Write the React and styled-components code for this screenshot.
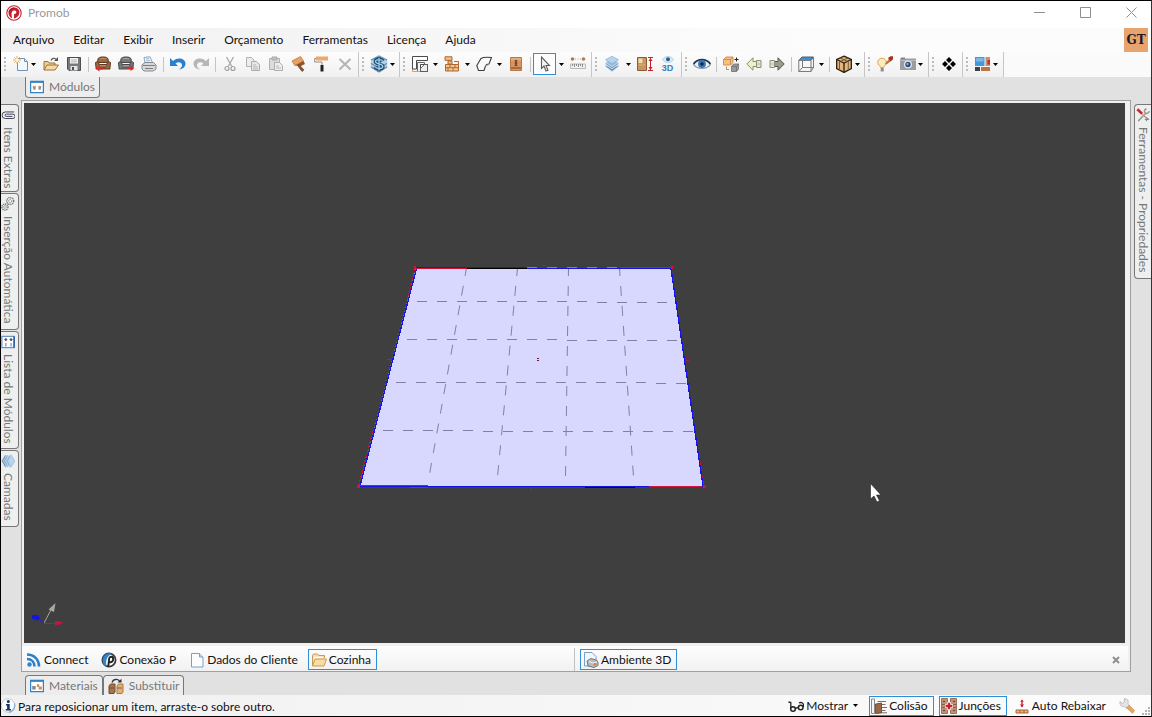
import React from 'react'
import styled, { createGlobalStyle, css } from 'styled-components';

const GlobalStyle = createGlobalStyle`
  * {
    box-sizing: border-box;
  }
  body {
    margin: 0;
    font-family: Lato, "Open Sans", sans-serif;
    font-size: 12px;
    line-height: 16px;
    color: #111;
  }
  button {
    font: inherit;
    color: inherit;
    background: none;
    border: none;
    padding: 0;
    margin: 0;
  }
  svg {
    display: block;
    flex: none;
  }
`;

/* ---------- icons ---------- */

function Icon({ size = 16, children }) {
  return <svg width={size} height={size} viewBox="0 0 16 16" aria-hidden="true">{children}</svg>
}

const CaretIcon = () => (
  <svg width="5" height="3" viewBox="0 0 5 3" aria-hidden="true"><path d="M0 0h5L2.5 3z" fill="#000" /></svg>
);

const LogoIcon = () => (
  <Icon>
    <circle cx="8" cy="8" r="7.2" fill="#fff" stroke="#c4202f" strokeWidth="1.1" />
    <path d="M2.500 8.500C2 4.500 5 2.300 8.500 2.400c4 .2 6 4 4.500 7-.8 2-2.500 3.500-5 4.100V9.200l1.300-.4c1.700-.8 1.200-3.300-.9-3.300-2.400 0-2.800 1.700-2.900 4L6 13.200c-2-.8-3.300-2.500-3.500-4.700z" fill="#c4202f" />
    <path d="M3.200 6.500c1-2.300 3-3.500 5.300-3.400" stroke="#8d1420" fill="none" />
  </Icon>
);

const NewIcon = () => (
  <Icon>
    <path d="M5.500 2.500h6l3 3v9h-10v-8" fill="#f4f9fe" stroke="#6f93b8" />
    <path d="M11.500 2.500v3h3" fill="#d5e6f6" stroke="#6f93b8" />
    <path d="M4 0v8M0 4h8M1.200 1.200l5.600 5.600M6.800 1.200L1.200 6.800" stroke="#e7a64e" strokeWidth=".9" />
    <circle cx="4" cy="4" r="1.600" fill="#fff6d8" />
  </Icon>
);

const OpenIcon = () => (
  <Icon>
    <path d="M1 14V5.500h4l1 1.500h6v2" fill="#f0cf93" stroke="#9c7436" />
    <path d="M1 14l3-5h11.500L12 14z" fill="#f6d9a4" stroke="#9c7436" />
    <path d="M8 4.500c1-2.500 3.500-3 5-1" fill="none" stroke="#555" strokeWidth="1.200" />
    <path d="M15 1v4h-4z" fill="#555" />
  </Icon>
);

const SaveIcon = () => (
  <Icon>
    <path d="M1.500 1.500h13v13H3l-1.500-1.500z" fill="#777a7d" stroke="#4d4f51" />
    <path d="M4 2h8v5.500H4z" fill="#f2f2f2" />
    <path d="M5 4h6M5 5.800h6" stroke="#a8a8a8" strokeWidth=".8" />
    <path d="M4.500 10h7v4.500h-7z" fill="#e4e4e4" />
    <path d="M6 11h2v3H6z" fill="#4d4f51" />
  </Icon>
);

function ArmchairIcon({ tone, edge, light, flip }) {
  return (
    <Icon>
      <path d="M2.500 6.500l.5-3.500C3.500 1.500 5 1 8 1s4.500.5 5 2l.5 3.500z" fill={tone} stroke={edge} />
      <path d="M5 3c1.500-.8 4.500-.8 6 0" fill="none" stroke={light} />
      <path d="M.5 6.500c1-1.200 3.500-.8 3.500 1.200V9h8V7.700c0-2 2.500-2.400 3.500-1.200L15 11.500V13H1v-1.500z" fill={tone} stroke={edge} />
      <path d="M4.500 8.500h7M4.500 11h7" stroke={edge} />
      <path d="M5 9.800h6" stroke={light} strokeWidth="1.300" />
      {flip
        ? <path d="M8.500 11h4V8.800L16 12l-3.500 3.200V13h-4z" fill="#d22e30" />
        : <path d="M8 11.500H4.500V9.300L1 12.500l3.500 3.200v-2.200H8z" fill="#d22e30" />}
    </Icon>
  )
}

const PrintIcon = () => (
  <Icon>
    <path d="M4 7L3 1.500 9 .7l2.500 6z" fill="#e8f2fb" stroke="#8fa9c0" />
    <path d="M5 3l3-.4M5.400 4.800l3.500-.4" stroke="#83a9cc" strokeWidth=".8" />
    <path d="M1 9l3-2.500h8.500L15 9v4l-3 2H3l-2-2z" fill="#d8d8da" stroke="#87898c" />
    <path d="M2 9.500h12M4 12.500h8" stroke="#7d7f82" />
  </Icon>
);

function TurnIcon({ color, flip }) {
  return (
    <Icon>
      <g transform={flip ? 'matrix(-1 0 0 1 16 0)' : undefined}>
        <path d="M0 2v8h8L5.500 7.500C8.500 5 12.500 6.500 12 9.500c-.2 1.700-1.500 3-3 4.300C13 13 15.700 10.500 15.500 7.300 15 2.500 8 .5 3 5z" fill={color} />
      </g>
    </Icon>
  )
}

const CutIcon = () => (
  <Icon>
    <path d="M4.500 1l5.300 9.500M11.500 1L6.200 10.500" stroke="#a9a9a9" strokeWidth="1.300" />
    <circle cx="5" cy="12.500" r="2" fill="none" stroke="#a0a0a0" strokeWidth="1.200" />
    <circle cx="11" cy="12.500" r="2" fill="none" stroke="#a0a0a0" strokeWidth="1.200" />
  </Icon>
);

const CopyIcon = () => (
  <Icon>
    <path d="M1.500 1.500h5l2.500 2.500v6.500H1.500z" fill="#ececec" stroke="#b2b2b2" />
    <path d="M6.500 5.500h5l3 3v6h-8z" fill="#e6e6e6" stroke="#acacac" />
    <path d="M8 9h3M8 11h5M8 13h5" stroke="#b8b8b8" />
  </Icon>
);

const PasteIcon = () => (
  <Icon>
    <path d="M1.500 2.500h10v11h-10z" fill="#dcdcdc" stroke="#b0b0b0" />
    <path d="M4 1h5v3H4z" fill="#c4c4c4" stroke="#a8a8a8" />
    <path d="M6.500 6.500h5l3 3v5h-8z" fill="#efefef" stroke="#acacac" />
    <path d="M8 10h3M8 12h5" stroke="#b8b8b8" />
  </Icon>
);

const BrushIcon = () => (
  <Icon>
    <path d="M1 5L9.500.5l3 4.500-8.700 4.500z" fill="#e9a263" stroke="#c27a3d" strokeWidth=".8" />
    <path d="M4 9.500L12.500 5l1.500 3-4 2z" fill="#8d5430" />
    <path d="M8 8.500l5 5.500-2 1.500-4.500-6z" fill="#8a5230" stroke="#6d3d20" strokeWidth=".6" />
  </Icon>
);

const RollerIcon = () => (
  <Icon>
    <path d="M2 .5h12v4H2z" fill="#eba869" />
    <path d="M2 2.500H.7v3.500H8v3" fill="none" stroke="#8c8c8c" strokeWidth="1" />
    <path d="M6.500 9h3v6.500h-3z" fill="#222" />
  </Icon>
);

const DeleteIcon = () => (
  <Icon><path d="M2.500 3l11 10.500M13.500 3l-11 10.500" stroke="#b4b4b4" strokeWidth="2" /></Icon>
);

const DollarIcon = () => (
  <Icon size={18}>
    <path d="M.8 4.500L8 .8l7.200 3.700v6L8 15.200.8 10.500z" fill="#b5d3ea" />
    <path d="M.8 4.500L8 .8l7.200 3.700M.8 7.500L8 11.500l7.200-4M.8 10.500L8 15l7.200-4.500" fill="none" stroke="#6f97b6" strokeWidth="1.200" />
    <path d="M11.600 5.300C10.500 3.300 4.700 3 4.700 5.800c0 2.900 6.800 1.600 6.800 4.400 0 2.800-5.800 2.700-7.200.4M8 1.800v12.600" fill="none" stroke="#1e4a70" strokeWidth="3" />
    <path d="M11.400 5.300C10.500 3.700 4.900 3.500 4.900 5.800c0 2.600 6.500 1.600 6.500 4.400 0 2.300-5.400 2.300-6.900.4M8 2.500v11.300" fill="none" stroke="#9ecdec" strokeWidth="1.200" />
  </Icon>
);

const WallsIcon = () => (
  <Icon>
    <path d="M.5 4v11.500H8" stroke="#e39a63" fill="none" />
    <path d="M.5 13V.5h15v4H4.500V13z" fill="#fff" stroke="#4a4a4a" />
    <path d="M5.500 15V6.500h7v1.500" fill="none" stroke="#6a6a6a" />
    <path d="M8.500 8.500h7v7h-7z" fill="#fff" stroke="#4a4a4a" />
    <path d="M8.500 12.500l4-4h3v7h-7z" fill="#eee" stroke="#4a4a4a" strokeWidth=".8" />
  </Icon>
);

const BricksIcon = () => (
  <Icon>
    <path d="M1 .8h7v3.500H1zM4 5h4v3H4z" fill="#f2c08c" stroke="#b0662e" />
    <path d="M1.500 8.500h13v6.500h-13z" fill="#f3c494" stroke="#b0662e" />
    <path d="M1.500 11.700h13M6 8.500v3.200M11 8.500v3.200M4 11.700V15M9 11.700V15M10 5.500h4.500v3" stroke="#b0662e" fill="none" />
  </Icon>
);

const ShapeIcon = () => (
  <Icon>
    <path d="M5 2.500c2-1.200 6-1.500 10.500-1L13 8c-2 0-3 .5-3.500 2L8 14.500H2.500L.8 9.500z" fill="#fafafa" stroke="#3c3c3c" strokeWidth="1.100" />
    <path d="M13 8.500L9 10" stroke="#999" />
  </Icon>
);

const CabinetIcon = () => (
  <Icon>
    <path d="M2.500 1.500h11v13h-11z" fill="#d9945f" stroke="#b8794b" />
    <path d="M3 2h10v2.500H3z" fill="#e6ab78" />
    <path d="M3 12h10" stroke="#6f4325" />
    <path d="M8 4.500v5" stroke="#3f2a1b" strokeWidth="1.200" />
    <path d="M6.500 4.500h3M6.500 9.500h3M6.500 7h3" fill="none" stroke="#5a3b25" strokeWidth=".8" />
  </Icon>
);

const PointerIcon = () => (
  <Icon><path d="M4.500 1v11.500L7 10l2 5 2-.8-2-4.700h3.500z" fill="#f6f6f6" stroke="#5d5d5d" strokeWidth="1.100" /></Icon>
);

const MeasureIcon = () => (
  <Icon>
    <circle cx="2.500" cy="3" r="1.800" fill="#b9764f" />
    <circle cx="13.500" cy="3" r="1.800" fill="#b9764f" />
    <path d="M5 3h1M7.500 3h1M10 3h1" stroke="#aaa" />
    <path d="M.5 8h15v4.500H.5z" fill="#f0f0f0" stroke="#b9b9b9" />
    <path d="M2.500 8v2M4.500 8v3M6.500 8v2M8.500 8v3M10.500 8v2M12.500 8v3" stroke="#777" strokeWidth=".8" />
  </Icon>
);

const LayersIcon = () => (
  <Icon>
    <path d="M1.500 10.500L8 15.500l6.500-5V9L8 12 1.500 9z" fill="#6a8fb6" stroke="#dcebf7" strokeWidth=".6" />
    <path d="M1.500 8.200L8 13l6.500-4.800V6.500h-13z" fill="#7fa5cb" stroke="#e4f0fa" strokeWidth=".7" />
    <path d="M1.500 6L8 10.500 14.500 6 8 3z" fill="#93b7d9" stroke="#e4f0fa" strokeWidth=".7" />
    <path d="M1.500 3.700L8 7.700l6.500-4L8 .3z" fill="#b9d4ec" stroke="#8db2d5" strokeWidth=".7" />
  </Icon>
);

const HeightIcon = () => (
  <Icon>
    <path d="M.5 1.500h9v13h-9z" fill="#c8955e" stroke="#8b5d32" />
    <path d="M1.500 2.500h4v4.500h-4z" fill="#f2dcae" />
    <path d="M1.500 9h7" stroke="#ddb07c" />
    <path d="M11 1.500h5M11 14.500h5M13.500 2v12" stroke="#c8202e" />
    <path d="M11.500 5l2-3 2 3zM11.500 11l2 3 2-3z" fill="#c8202e" />
  </Icon>
);

const View3DIcon = () => (
  <ThreeD>
    <svg width="12" height="7" viewBox="0 0 12 7" aria-hidden="true">
      <path d="M.5 3.500c2-4 9-4 11 0-2 4-9 4-11 0z" fill="#d7eaf6" stroke="#a4c5da" strokeWidth=".7" />
      <circle cx="6" cy="3.300" r="2" fill="#27618c" />
    </svg>
    3D
  </ThreeD>
);

const EyeIcon = () => (
  <Icon size={18}>
    <path d="M.5 8.500C4 3 12 3 15.500 8.500 12 13 4 13 .5 8.500z" fill="#eef3f7" stroke="#8a98a6" />
    <path d="M.5 8C4 2.800 12 2.800 15.500 8" fill="none" stroke="#25384d" strokeWidth="1.500" />
    <circle cx="8" cy="8" r="3.500" fill="#3a78bd" />
    <circle cx="8" cy="8" r="1.600" fill="#0e2b4e" />
  </Icon>
);

const TransformIcon = () => (
  <Icon>
    <path d="M.5 3.500L3 1h7v5.500L7.500 9h-7z" fill="#f3bf82" stroke="#c98b4f" strokeWidth=".9" />
    <path d="M.5 3.500h7L10 1M7.500 3.500V9" fill="none" stroke="#c98b4f" strokeWidth=".9" />
    <path d="M8.500 10.500l2-2.500H16v4.500L13.500 15.500h-5z" fill="#9a9a9a" stroke="#6e6e6e" strokeWidth=".8" />
    <path d="M8.500 10.500h5L16 8M13.500 10.500v5" fill="none" stroke="#6e6e6e" strokeWidth=".8" />
    <path d="M13.500 1.500v4M11.500 3.500h4" stroke="#222" />
    <path d="M3.500 10.500v3H6" fill="none" stroke="#c98b4f" />
  </Icon>
);

const StepIcon = ({ flip }) => (
  <Icon>
    <g transform={flip ? 'matrix(-1 0 0 1 16 0)' : undefined}>
      <path d="M.8 8L7 1.800v3.700h3.500v5H7v3.700z" fill={flip ? '#9b9b92' : '#eef0c0'} stroke={flip ? '#55554f' : '#8d8e74'} />
      <path d="M10.500 4.500H15v7h-4.500z" fill="#e6e7c4" stroke="#8d8e80" />
      <path d="M10.500 8H15" stroke="#b5b69c" />
    </g>
  </Icon>
);

const WireCubeIcon = () => (
  <Icon>
    <path d="M4 1h11.500L13 4.500H.800z" fill="#3d8fd8" stroke="#55616b" />
    <path d="M.8 4.500H13v11H.8zM13 15.500l2.500-4V1M4.500 5v6.500h11M4.500 11.500L.8 15.500" fill="none" stroke="#777c80" />
  </Icon>
);

const BoxIcon = () => (
  <Icon size={18}>
    <path d="M8 1l6.500 3v8L8 15.500 1.500 12V4z" fill="#e5b77d" stroke="#2d2218" strokeWidth="1.200" />
    <path d="M1.500 4L8 7.200 14.500 4M8 7.200v8.300" fill="none" stroke="#2d2218" strokeWidth="1.200" />
    <path d="M4 5.500V13M11.800 5.500v8M4.700 2.700l6.500 3M11.500 2.600L5 5.700" stroke="#7a5630" strokeWidth=".9" />
  </Icon>
);

const BulbIcon = () => (
  <Icon>
    <path d="M3.500 11.500C3.500 9.500.7 9 .7 6.500A4.300 4.300 0 0 1 9.300 6.500C9.300 9 6.700 9.500 6.700 11.500z" fill="#fdebbd" stroke="#e0a34a" />
    <path d="M3.700 12h3v3.500h-3z" fill="#8d8d8d" />
    <path d="M8 7.500L12 3l2 2-4.500 3.500z" fill="#b5793f" />
    <path d="M11 2L13.500.3H16v3L13.500 5.500z" fill="#a63322" />
  </Icon>
);

const CameraIcon = () => (
  <Icon>
    <path d="M0 2.500h16v11.500H0z" fill="#9a9da1" />
    <path d="M1 1.500h4v1.500H1z" fill="#7f8286" />
    <path d="M0 4.500h16" stroke="#b8bbbe" />
    <circle cx="8" cy="8.500" r="4" fill="#e3e7ea" />
    <circle cx="8" cy="8.500" r="2.700" fill="#2f4f80" />
    <circle cx="7.500" cy="8" r="1" fill="#9fc3ea" />
  </Icon>
);

const DiamondsIcon = () => (
  <Icon>
    <path d="M8 1l3 3-3 3-3-3zM8 9l3 3-3 3-3-3zM4 5l3 3-3 3-3-3zM12 5l3 3-3 3-3-3z" fill="#000" />
  </Icon>
);

const LayoutIcon = () => (
  <Icon>
    <path d="M0 1h9.500v9H0z" fill="#4497d8" />
    <path d="M1 2h7.500v3.500H1z" fill="#78b9e8" />
    <path d="M10.500 1h4.500v9h-4.500z" fill="#cf9163" />
    <path d="M12.500 4h2.500v4.500h-2.500z" fill="#c52b3a" />
    <path d="M0 11h5v4H0z" fill="#3f4347" />
    <path d="M6 11h9v4H6z" fill="#ba744a" />
  </Icon>
);

const ModulesIcon = () => (
  <Icon size={14}>
    <path d="M.7 1.500h14.600v13H.7z" fill="#fff" stroke="#3583c4" strokeWidth="1.400" />
    <path d="M.5 2.200h15" stroke="#3583c4" strokeWidth="2.200" />
    <path d="M3 7h2.500v4H4zM10.500 7H13l-1 4h-1.500z" fill="#a6805f" />
    <path d="M6 6.500v4.500M10.200 6.500v4.500" stroke="#777" strokeWidth=".8" />
  </Icon>
);

const MaterialsIcon = () => (
  <Icon size={14}>
    <path d="M.7 1.500h14.600v13H.7z" fill="#fff" stroke="#3583c4" strokeWidth="1.400" />
    <path d="M.5 2.200h15" stroke="#3583c4" strokeWidth="2.200" />
    <path d="M2.500 8h4v4h-4z" fill="#7b8d9c" />
    <path d="M8 6h2.500v3H8zM10 8.500h3.500V12H10z" fill="#d18c55" />
  </Icon>
);

const SwapIcon = () => (
  <Icon>
    <path d="M1 8l1.500-2H7v8l-1 1.500H1z" fill="#a4764c" stroke="#6f4c2e" />
    <path d="M9 8l1.500-2H15v8l-1 1.500H9z" fill="#e2b077" stroke="#a97a45" />
    <path d="M4 4.500C5 1 9.500.5 11.500 3" fill="none" stroke="#333" strokeWidth="1.300" />
    <path d="M9.500 4.500h4V.8z" fill="#333" />
    <path d="M1 10h5M9 10h5" stroke="#6f4c2e" strokeWidth=".8" />
  </Icon>
);

const ClipIcon = () => (
  <Icon size={14}>
    <path d="M15 4.500H5a3.500 3.500 0 0 0 0 7.500h8.500a2.500 2.500 0 0 0 0-5H6a1.300 1.300 0 0 0 0 2.600h7" fill="none" stroke="#3d3d56" strokeWidth="1.100" />
  </Icon>
);

const GearsIcon = () => (
  <Icon size={14}>
    <g fill="none" stroke="#777" strokeDasharray="1.500 .8">
      <circle cx="10.500" cy="4.500" r="4" strokeWidth="1.600" />
      <circle cx="10.500" cy="4.500" r="1.800" />
      <circle cx="4.500" cy="11.500" r="3.500" strokeWidth="1.600" />
      <circle cx="4.500" cy="11.500" r="1.500" />
    </g>
  </Icon>
);

const ListIcon = () => (
  <Icon size={14}>
    <path d="M1 1.500h14v13H1z" fill="#fff" stroke="#6d94c8" strokeWidth="1.400" />
    <path d="M15 1.500v13" stroke="#2b5fa8" strokeWidth="1.800" />
    <path d="M3.500 5.500L5.500 3l2 2.500-2 1.500zM9.500 5.500l2-2.500 2 2.500-2 1.500z" fill="#6b5145" />
    <path d="M5.500 9v4M11.500 9v4" stroke="#6b9fd4" strokeWidth="1.500" />
  </Icon>
);

const SideLayersIcon = () => (
  <Icon size={14}>
    <path d="M4.500 1L.5 8l4 7H6V1z" fill="#6a8fb6" stroke="#e4f0fa" strokeWidth=".6" />
    <path d="M6.800 1L2.800 8l4 7h1.500V1z" fill="#7fa5cb" stroke="#e4f0fa" strokeWidth=".7" />
    <path d="M9 1L5.200 8 9 15h1.500V1z" fill="#93b7d9" stroke="#e4f0fa" strokeWidth=".7" />
    <path d="M11.500 1l-4 7 4 7 4.200-7z" fill="#b9d4ec" stroke="#8db2d5" strokeWidth=".7" />
  </Icon>
);

const ToolsIcon = () => (
  <Icon size={14}>
    <path d="M2.500 15l8.500-9M12 1c-2.500.5-3 3-1.500 4.500S15 6 15 3.500" fill="none" stroke="#9a9a9a" strokeWidth="1.800" />
    <path d="M9 9l5 3.500M12 10.500V15M10 13h5" stroke="#8a8a8a" strokeWidth="1.300" />
    <path d="M1.500 1.500l5.500 5" stroke="#cf2530" strokeWidth="3" />
    <path d="M7 7l2.500 2" stroke="#e0a565" strokeWidth="2" />
  </Icon>
);

const FeedIcon = () => (
  <Icon>
    <circle cx="3.500" cy="12.500" r="2.200" fill="#2f86cf" />
    <path d="M1 7c4.500 0 7.500 3 7.500 7.500M1 2.500c7 0 12 5 12 12" fill="none" stroke="#2f7fc4" strokeWidth="2.600" />
  </Icon>
);

const ConexaoIcon = () => (
  <Icon>
    <circle cx="8" cy="8" r="6.600" fill="#fff" stroke="#3a3c42" strokeWidth="1.800" />
    <path d="M11 1.500C4 0 0 6 2.500 12.500L5.500 15C4.500 9 5 5 11 1.500z" fill="#2f86cf" />
    <path d="M7.200 15l1-8.500c.5-2.500 4.300-2.500 4 .8-.2 2.500-2.500 3.400-4 2.500" fill="none" stroke="#222" strokeWidth="1.900" />
  </Icon>
);

const PageIcon = () => (
  <Icon>
    <path d="M2.500 1.500h8l3.500 3.500v10H2.500z" fill="#fbfdff" stroke="#7c9fca" />
    <path d="M10.500 1.500V5H14" fill="#cadcf0" stroke="#7c9fca" />
  </Icon>
);

const FolderIcon = () => (
  <Icon>
    <path d="M1.500 14V3.500l1-1.500h4l1 1.500h6V6" fill="#f5dcae" stroke="#c99a55" />
    <path d="M3 5.500h9M2.500 7.500h9" stroke="#fff" strokeWidth="1.300" />
    <path d="M1.500 14l2.500-7h11.500L13 14z" fill="#f7dca4" stroke="#c99a55" />
  </Icon>
);

const SceneIcon = () => (
  <Icon>
    <path d="M1.500.5h7.500l4 4v9.500H1.500z" fill="#f2f7fc" stroke="#7c9fca" />
    <path d="M4 9l3.500-2.500 6 1.500 1.500 2.500v3l-4 2L5 14z" fill="#b7b9bd" stroke="#74777b" />
    <path d="M6 9.500l4 1.500 4-1" fill="none" stroke="#f3f3f3" />
    <circle cx="12" cy="12.200" r="1.300" fill="#d07d45" />
  </Icon>
);

const InfoIcon = () => (
  <Icon>
    <circle cx="7" cy="7.500" r="6.700" fill="#fdfdfd" stroke="#c5c9ce" />
    <path d="M13.500 5.500A6.600 6.600 0 0 1 8 14.200" fill="none" stroke="#8cb0da" strokeWidth="1.500" />
    <circle cx="7.300" cy="3.500" r="1.500" fill="#16365f" />
    <path d="M5 6h3.700v5h1.300v1.500H4.800V11h1.300V7.400H5z" fill="#16365f" />
  </Icon>
);

const GlassesIcon = () => (
  <Icon size={16}>
    <path d="M.5 4l2.300.5V10M15.500 9V6.500C15 4.500 12.500 4 11 5" fill="none" stroke="#222" strokeWidth="1.300" />
    <circle cx="5" cy="11" r="2.300" fill="none" stroke="#222" strokeWidth="1.500" />
    <circle cx="12.700" cy="9.500" r="2.300" fill="none" stroke="#222" strokeWidth="1.500" />
    <path d="M7.200 10.300l3.300-.8" stroke="#222" strokeWidth="1.300" />
  </Icon>
);

const CollisionIcon = () => (
  <Icon>
    <path d="M.5 1h3v14.500h-3z" fill="#f4f4f4" stroke="#8a8a8a" />
    <path d="M4.500 6l6-1v10l-6 .5z" fill="#9b6746" stroke="#5c3c28" strokeWidth=".8" />
    <path d="M6.500 3.500H15M11 6.500h3.500M11 9.500h5M11 12.500h3.500M11 14.800h5" stroke="#6c6058" strokeWidth=".9" />
  </Icon>
);

const JunctionIcon = () => (
  <Icon>
    <path d="M.5.5h6v6h-6zM9.500.5h6v6h-6zM.5 9.500h6v6h-6zM9.500 9.500h6v6h-6zM.5 6.500h15v3H.5z" fill="#c29276" stroke="#8d5d42" strokeWidth=".8" />
    <circle cx="3" cy="3.500" r=".8" fill="#333" />
    <circle cx="13" cy="3.500" r=".8" fill="#333" />
    <circle cx="3" cy="12.500" r=".8" fill="#333" />
    <circle cx="13" cy="12.500" r=".8" fill="#333" />
    <path d="M8 4.200v7.600M4.200 8h7.600" stroke="#fff" strokeWidth="4.200" />
    <path d="M8 4.700v6.600M4.700 8h6.600" stroke="#c8202e" strokeWidth="2.400" />
  </Icon>
);

const LowerIcon = () => (
  <Icon>
    <path d="M8 3v6" stroke="#c8202e" strokeWidth="1.400" />
    <path d="M5.800 6L8 9.500 10.200 6 8 7zM6.200 4L8 1.200 9.800 4 8 3.500z" fill="#c8202e" />
    <path d="M2 12h12v3H2z" fill="#e9b878" stroke="#9d5a35" strokeWidth=".9" />
    <path d="M6 12v3M10 12v3" stroke="#9d5a35" strokeWidth=".9" />
  </Icon>
);

const WrenchIcon = () => (
  <Icon>
    <path d="M1 3.500l2.500 2L5.500 4 5 1c3-.8 5 1.500 4 4.500l1.500 2-3 3-2-2C3 9.500.3 7 1 3.500z" fill="#e4e4e4" stroke="#b3b3b3" strokeWidth=".8" />
    <path d="M7.500 9.800l2.700-2.500 5.300 5.200-2 2.800z" fill="#e6a560" stroke="#cc8640" strokeWidth=".6" />
  </Icon>
);

/* ---------- building blocks ---------- */

function Split({ label, icon, active, wide }) {
  return (
    <>
      <Tool aria-label={label} $active={active}>{icon}</Tool>
      <CaretButton aria-label={label + ' opções'} $wide={wide}><CaretIcon /></CaretButton>
    </>
  )
}

function Merged({ label, icon }) {
  return <MergedTool aria-label={label}>{icon}<CaretIcon /></MergedTool>
}

function MainToolbar() {
  return (
    <Toolbar>
      <Group>
        <Grip />
        <Merged label="Novo" icon={<NewIcon />} />
        <Tool aria-label="Abrir"><OpenIcon /></Tool>
        <Tool aria-label="Salvar"><SaveIcon /></Tool>
        <Separator />
        <Tool aria-label="Importar"><ArmchairIcon tone="#9c6843" edge="#5b3822" light="#c99468" /></Tool>
        <Tool aria-label="Exportar"><ArmchairIcon tone="#77797c" edge="#444648" light="#a9abae" flip /></Tool>
        <Tool aria-label="Imprimir"><PrintIcon /></Tool>
        <Separator />
        <Tool aria-label="Desfazer"><TurnIcon color="#2b7fd0" /></Tool>
        <Tool aria-label="Refazer"><TurnIcon color="#b4b7ba" flip /></Tool>
        <Separator />
        <Tool aria-label="Recortar"><CutIcon /></Tool>
        <Tool aria-label="Copiar"><CopyIcon /></Tool>
        <Tool aria-label="Colar"><PasteIcon /></Tool>
        <Tool aria-label="Pincel"><BrushIcon /></Tool>
        <Tool aria-label="Rolo"><RollerIcon /></Tool>
        <Tool aria-label="Excluir"><DeleteIcon /></Tool>
      </Group>
      <Group>
        <Grip />
        <Merged label="Preço" icon={<DollarIcon />} />
      </Group>
      <Group>
        <Grip />
        <Split label="Paredes" icon={<WallsIcon />} />
        <Split label="Alvenaria" icon={<BricksIcon />} />
        <Split label="Formas" icon={<ShapeIcon />} />
        <Tool aria-label="Porta"><CabinetIcon /></Tool>
        <Separator />
        <Split label="Selecionar" icon={<PointerIcon />} active wide />
        <Tool aria-label="Medir"><MeasureIcon /></Tool>
      </Group>
      <Group>
        <Grip />
        <Split label="Camadas" icon={<LayersIcon />} wide />
        <Tool aria-label="Altura"><HeightIcon /></Tool>
        <Tool aria-label="Visualizar 3D"><View3DIcon /></Tool>
      </Group>
      <Group>
        <Grip />
        <Tool aria-label="Olho"><EyeIcon /></Tool>
        <Separator />
        <Tool aria-label="Transformar"><TransformIcon /></Tool>
        <Tool aria-label="Anterior"><StepIcon /></Tool>
        <Tool aria-label="Próximo"><StepIcon flip /></Tool>
        <Separator />
        <Split label="Vista" icon={<WireCubeIcon />} />
        <Separator />
        <Merged label="Volume" icon={<BoxIcon />} />
      </Group>
      <Group>
        <Grip />
        <Tool aria-label="Iluminação"><BulbIcon /></Tool>
        <Merged label="Câmera" icon={<CameraIcon />} />
      </Group>
      <Group>
        <Grip />
        <Tool aria-label="Mover"><DiamondsIcon /></Tool>
      </Group>
      <Group>
        <Grip />
        <Merged label="Layout" icon={<LayoutIcon />} />
      </Group>
    </Toolbar>
  )
}

const gridRows = [
  'M417 301.5H597', 'M597 302.5H667', 'M407 339.5H567', 'M567 340.5H678',
  'M396 382.5H656', 'M656 383.5H686', 'M383 430.5H483', 'M483 431.5H694',
];
const gridColumns = ['M466.5 268L429 477', 'M517.500 268L497.500 477', 'M568.5 268L565.500 477', 'M619.500 268L633.500 477'];

function Scene() {
  return (
    <SceneDrawing viewBox="24 103 1101 540" preserveAspectRatio="xMidYMid meet" role="img" aria-label="Ambiente 3D">
      <path d="M416 268H671L703 486H359.500z" fill="#d8d8fe" />
      <g fill="none" stroke="#8080a8" strokeDasharray="10 10">
        {gridRows.map(d => <path key={d} d={d} />)}
        {gridColumns.map(d => <path key={d} d={d} strokeDashoffset="2" />)}
      </g>
      <g fill="none" shapeRendering="crispEdges">
        <path d="M415 268L407 301M373 431L358.500 486M671.500 268L676 301M695 432L704 486" stroke="#c8143c" strokeDasharray="3 2" />
        <path d="M416.500 268.500L360 486M671 268.500L703 486" stroke="#1414f0" strokeWidth="1.300" />
        <path d="M416 267.500H527" stroke="#1414e0" />
        <path d="M416 268.500H467M620 267.500H671" stroke="#d0143c" />
        <path d="M467 268.500H527" stroke="#000" />
        <path d="M527 268.500H671" stroke="#1414e0" />
        <path d="M527 267.500H620" stroke="#8a8a80" strokeDasharray="10 10" />
        <path d="M359 486.500H704" stroke="#1414e0" />
        <path d="M360 485.500H428M649 486.500H702M410 487.500H428" stroke="#d0143c" />
        <path d="M585 487.500H635" stroke="#000" />
        <path d="M387 359.500H391M686 360.500H689M543 265.500H545M530 489.500H532" stroke="#c8143c" />
        <path d="M357 486h3M703 486h3M414 267.500h2M671 267.500h2" stroke="#d0143c" strokeWidth="3" />
        <path d="M537 358.500h2M537 360.500h2" stroke="#701838" />
      </g>
      <path d="M870.500 483.500v15.500l3.500-3 3 6 2.500-1.300-3-5.700h4.500z" fill="#fff" stroke="#222" strokeWidth=".6" />
      <path d="M44 623L52 608" stroke="#a8a8a0" />
      <path d="M55.500 603L48.500 609.500 54 612z" fill="#a8a8a0" />
      <path d="M44 623.500H56" stroke="#c8143c" />
      <path d="M55 621l5 .500 3.500 1.500-3.500 1.500-5 1z" fill="#c8143c" />
      <path d="M44 623l-6-4" stroke="#1414e8" strokeDasharray="2 1" />
      <path d="M32 615h6l2 3-2 2.500-6-2z" fill="#1414e8" />
    </SceneDrawing>
  )
}

function App() {
  const menus = ['Arquivo', 'Editar', 'Exibir', 'Inserir', 'Orçamento', 'Ferramentas', 'Licença', 'Ajuda'];

  return (
    <Window>
      <GlobalStyle />
      <TitleBar>
        <LogoIcon />
        <Title>Promob</Title>
        <WindowButton aria-label="Minimizar">
          <svg width="11" height="11"><path d="M0 5.500h11" stroke="#8f8f8f" /></svg>
        </WindowButton>
        <WindowButton aria-label="Maximizar">
          <svg width="11" height="11"><path d="M.5.5h10v10H.5z" fill="none" stroke="#8f8f8f" /></svg>
        </WindowButton>
        <WindowButton aria-label="Fechar">
          <svg width="11" height="11"><path d="M.5.5l10 10M10.500.5l-10 10" stroke="#8f8f8f" /></svg>
        </WindowButton>
      </TitleBar>
      <MenuBar>
        {menus.map(name => <MenuItem key={name}>{name}</MenuItem>)}
        <Avatar>GT</Avatar>
      </MenuBar>
      <MainToolbar />
      <TopTabs>
        <DockTab $side="top"><ModulesIcon />Módulos</DockTab>
      </TopTabs>
      <Workspace>
        <SideTabs>
          <SideTab $size={88}><ClipIcon />Itens Extras</SideTab>
          <SideTab $size={137}><GearsIcon />Inserção Automática</SideTab>
          <SideTab $size={118}><ListIcon />Lista de Módulos</SideTab>
          <SideTab $size={77}><SideLayersIcon />Camadas</SideTab>
        </SideTabs>
        <Frame>
          <Viewport><Scene /></Viewport>
          <DocumentBar>
            <DocumentGroup>
              <Doc><FeedIcon />Connect</Doc>
              <Doc><ConexaoIcon />Conexão P</Doc>
              <Doc><PageIcon />Dados do Cliente</Doc>
              <Doc $active><FolderIcon />Cozinha</Doc>
            </DocumentGroup>
            <Doc $active><SceneIcon />Ambiente 3D</Doc>
            <CloseDoc aria-label="Fechar documento">
              <svg width="8" height="8"><path d="M1 1l6 6M7 1L1 7" stroke="#8f8f8f" strokeWidth="2" /></svg>
            </CloseDoc>
          </DocumentBar>
        </Frame>
        <SideTabs>
          <SideTab $right $size={175}><ToolsIcon />Ferramentas - Propriedades</SideTab>
        </SideTabs>
      </Workspace>
      <BottomTabs>
        <DockTab $side="bottom"><MaterialsIcon />Materiais</DockTab>
        <DockTab $side="bottom"><SwapIcon />Substituir</DockTab>
      </BottomTabs>
      <StatusBar>
        <InfoIcon />
        <StatusText>Para reposicionar um item, arraste-o sobre outro.</StatusText>
        <StatusButton><GlassesIcon />Mostrar<StatusCaret><CaretIcon /></StatusCaret></StatusButton>
        <StatusButton $active><CollisionIcon />Colisão</StatusButton>
        <StatusButton $active><JunctionIcon />Junções</StatusButton>
        <StatusButton><LowerIcon />Auto Rebaixar</StatusButton>
        <StatusButton aria-label="Configurar"><WrenchIcon /></StatusButton>
        <ResizeGrip width="10" height="10" aria-hidden="true">
          <path d="M7 1h2v2H7zM4 4h2v2H4zM7 4h2v2H7zM1 7h2v2H1zM4 7h2v2H4zM7 7h2v2H7z" fill="#b5b5b5" />
        </ResizeGrip>
      </StatusBar>
    </Window>
  )
}
export default App


const Window = styled.div`
  display: flex;
  flex-direction: column;
  height: 100vh;
  border: 1px solid #000;
  border-right-color: #333;
  background: #e1e1e1;
  overflow: hidden;
`;

const TitleBar = styled.header`
  display: flex;
  align-items: center;
  flex: none;
  gap: 6px;
  height: 27px;
  padding: 0 0 4px 5px;
  background: #fff;
`;

const Title = styled.h1`
  flex: 1;
  margin: 0;
  font-size: 12px;
  font-weight: 400;
  color: #999;
`;

const WindowButton = styled.button`
  display: flex;
  align-items: center;
  justify-content: center;
  width: 40px;
  height: 23px;
`;

const MenuBar = styled.nav`
  display: flex;
  align-items: center;
  flex: none;
  height: 24px;
  padding: 0 3px 0 2px;
  background: linear-gradient(90deg, #f0f0f0, #fcfcfc 70%);
`;

const MenuItem = styled.button`
  padding: 0 9px 0 10px;
  height: 24px;
`;

const Avatar = styled.button`
  width: 24px;
  height: 24px;
  margin-left: auto;
  background: #e9a36c;
  color: #1c1a2c;
  font: 700 12px/24px "DejaVu Serif", "Liberation Serif", serif;
`;

const Toolbar = styled.div`
  display: flex;
  flex: none;
  height: 25px;
  background: #fafafa;
`;

const Group = styled.div`
  display: flex;
  align-items: center;
  padding: 0 2px 1px 0;
  border-right: 1px solid #c6c6c6;
  background: linear-gradient(#fdfdfd, #f0f0f0);
`;

const Grip = styled.span`
  width: 2px;
  height: 14px;
  margin: 0 3px;
  background: repeating-linear-gradient(#bcbcbc 0 2px, transparent 2px 4px);
`;

const Separator = styled.span`
  width: 1px;
  height: 15px;
  margin: 0 2px 0 3px;
  background: #c4c4c4;
`;

const Tool = styled.button`
  display: flex;
  align-items: center;
  justify-content: center;
  width: 23px;
  height: 22px;
  ${props => props.$active && css`
    border: 1px solid #2e8fd8;
    background: #fbfdff;
  `}
`;

const ThreeD = styled.span`
  display: flex;
  flex-direction: column;
  align-items: center;
  color: #3b7fc2;
  font: 700 9px/10px "Liberation Sans", sans-serif;
`;

const MergedTool = styled.button`
  display: flex;
  align-items: center;
  justify-content: center;
  gap: 2px;
  width: 30px;
  height: 22px;
`;

const CaretButton = styled.button`
  display: flex;
  align-items: center;
  justify-content: center;
  width: ${props => props.$wide ? 10 : 9}px;
  height: 22px;
`;

const TopTabs = styled.div`
  display: flex;
  flex: none;
  height: 23px;
  padding-left: 24px;
`;

const BottomTabs = styled.div`
  display: flex;
  align-items: flex-end;
  flex: none;
  height: 23px;
  padding-left: 24px;
`;

const DockTab = styled.button`
  display: flex;
  align-items: center;
  gap: 5px;
  padding: 0 4px;
  color: #777;
  background: #ededed;
  border: 1px solid #777;
  ${props => props.$side === 'top' ? css`
    height: 21px;
    border-top: none;
    border-radius: 0 0 4px 4px;
  ` : css`
    height: 20px;
    border-bottom: none;
    border-radius: 4px 4px 0 0;
  `}
`;

const Workspace = styled.div`
  display: flex;
  flex: 1;
  min-height: 0;
`;

const SideTabs = styled.div`
  display: flex;
  flex-direction: column;
  flex: none;
  gap: 1px;
  padding-top: 4px;
`;

const SideTab = styled.button`
  display: flex;
  align-items: center;
  gap: 5px;
  height: ${props => props.$size}px;
  padding-top: 3px;
  writing-mode: vertical-rl;
  line-height: 14px;
  white-space: nowrap;
  color: #777;
  background: #eef0f0;
  border: 1px solid #777;
  ${props => props.$right ? css`
    width: 17px;
    border-right: none;
    border-radius: 4px 0 0 4px;
  ` : css`
    width: 18px;
    padding-right: 3px;
    border-left: none;
    border-radius: 0 4px 4px 0;
  `}
`;

const Frame = styled.main`
  display: flex;
  flex-direction: column;
  flex: 1;
  min-width: 0;
  margin: 0 3px 0 2px;
  border: 1px solid #a0a0a0;
  background: #f0f0f0;
`;

const Viewport = styled.div`
  flex: 1;
  min-height: 0;
  margin: 2px 5px 3px 2px;
  background: #3f3f3f;
`;

const SceneDrawing = styled.svg`
  width: 100%;
  height: 100%;
`;

const DocumentBar = styled.div`
  display: flex;
  align-items: center;
  flex: none;
  height: 25px;
  padding-top: 2px;
  margin-right: 2px;
  background: linear-gradient(#fefefe, #f1f1f1);
`;

const DocumentGroup = styled.div`
  display: flex;
  flex: 0 0 50%;
  align-items: center;
  gap: 4px;
  height: 23px;
  padding-left: 1px;
  margin-right: 5px;
  border-right: 1px solid #c0c0c0;
`;

const Doc = styled.button`
  display: flex;
  align-items: center;
  gap: 2px;
  height: 21px;
  padding: 0 5px 0 2px;
  white-space: nowrap;
  border: 1px solid ${props => props.$active ? '#2e8fd8' : 'transparent'};
`;

const CloseDoc = styled.button`
  padding: 4px;
  margin-left: auto;
  margin-right: 4px;
`;

const StatusBar = styled.footer`
  display: flex;
  align-items: center;
  flex: none;
  height: 21px;
  background: linear-gradient(90deg, #f0f0f0, #fcfcfc);
`;

const StatusText = styled.p`
  flex: 1;
  margin: 3px 0 0 1px;
`;

const StatusButton = styled.button`
  display: flex;
  align-items: center;
  gap: 2px;
  height: 20px;
  padding: 0 5px 0 1px;
  white-space: nowrap;
  border: 1px solid ${props => props.$active ? '#2e8fd8' : 'transparent'};

  & + & {
    margin-left: 5px;
  }
`;

const StatusCaret = styled.span`
  margin-left: 3px;
`;

const ResizeGrip = styled.svg`
  align-self: flex-end;
`;
